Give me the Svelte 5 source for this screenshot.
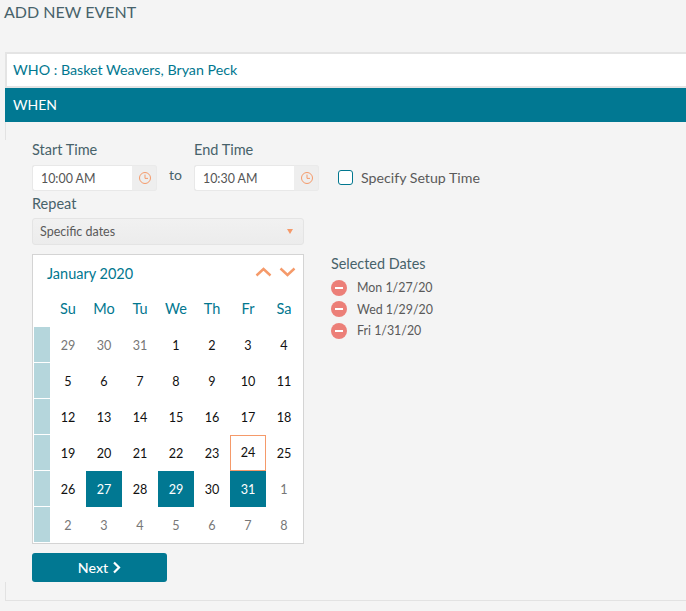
<script lang="ts">
	const dayNames = ['Su', 'Mo', 'Tu', 'We', 'Th', 'Fr', 'Sa']
	const weeks = [
		[29, 30, 31, 1, 2, 3, 4],
		[5, 6, 7, 8, 9, 10, 11],
		[12, 13, 14, 15, 16, 17, 18],
		[19, 20, 21, 22, 23, 24, 25],
		[26, 27, 28, 29, 30, 31, 1],
		[2, 3, 4, 5, 6, 7, 8]
	]
	const selected = [27, 29, 31]
	const selectedDates = ['Mon 1/27/20', 'Wed 1/29/20', 'Fri 1/31/20']

	function isOther(week: number, day: number) {
		return (week === 0 && day > 20) || (week >= 4 && day < 15)
	}
</script>

{#snippet clock()}
	<svg class="clock" width="14" height="14" viewBox="0 0 14 14" aria-hidden="true">
		<circle cx="7" cy="7" r="5.5" />
		<path d="M7 3.6V7.4H10" />
	</svg>
{/snippet}

<div class="page">
	<h1>ADD NEW EVENT</h1>
	<div class="who">WHO : Basket Weavers, Bryan Peck</div>
	<div class="when-bar">WHEN</div>
	<div class="panel">
		<div class="content">
			<div class="times">
				<div class="field">
					<span class="label">Start Time</span>
					<div class="time-input">
						<span class="value">10:00 AM</span>
						<span class="addon">{@render clock()}</span>
					</div>
				</div>
				<span class="to">to</span>
				<div class="field">
					<span class="label">End Time</span>
					<div class="time-input">
						<span class="value">10:30 AM</span>
						<span class="addon">{@render clock()}</span>
					</div>
				</div>
				<label class="setup">
					<span class="checkbox"></span>
					Specify Setup Time
				</label>
			</div>

			<div class="label repeat-label">Repeat</div>
			<div class="select">
				<span>Specific dates</span>
				<span class="caret"></span>
			</div>

			<div class="date-row">
				<div class="calendar">
					<div class="cal-head">
						<span class="month">January 2020</span>
						<span class="arrows">
							<svg width="17" height="10" viewBox="0 0 17 10" aria-hidden="true"><path d="M1.5 8.5L8.5 2L15.5 8.5" /></svg>
							<svg width="17" height="10" viewBox="0 0 17 10" aria-hidden="true"><path d="M1.5 1.5L8.5 8L15.5 1.5" /></svg>
						</span>
					</div>
					<div class="grid day-names">
						<span class="wk"></span>
						{#each dayNames as name}
							<span class="day-name">{name}</span>
						{/each}
					</div>
					{#each weeks as week, w}
						<div class="grid">
							<span class="wk filled"></span>
							{#each week as day}
								{@const other = isOther(w, day)}
								<span
									class="day"
									class:other
									class:today={day === 24}
									class:selected={!other && selected.includes(day)}>{day}</span>
							{/each}
						</div>
					{/each}
				</div>

				<div class="selected-dates">
					<div class="label small">Selected Dates</div>
					{#each selectedDates as date}
						<div class="date-item">
							<span class="remove"></span>
							{date}
						</div>
					{/each}
				</div>
			</div>

			<button class="next">
				Next
				<svg width="9" height="13" viewBox="0 0 9 13" aria-hidden="true"><path d="M2 1.5L7 6.5L2 11.5" /></svg>
			</button>
		</div>
	</div>
</div>

<style>
	:global(body) {
		background: #f4f4f4;
		font-family: Lato, 'Liberation Sans', sans-serif;
	}

	.page {
		height: 611px;
		overflow: hidden;
	}

	h1 {
		margin: 0;
		padding: 2px 0 0 4px;
		height: 52px;
		box-sizing: border-box;
		font-size: 16px;
		line-height: 19px;
		font-weight: 400;
		color: #47626a;
	}

	.who {
		box-sizing: border-box;
		height: 36px;
		margin-left: 5px;
		padding-left: 6px;
		background: #fff;
		border: 2px solid #e4e4e4;
		border-right: none;
		font-size: 14.25px;
		line-height: 32px;
		color: #01778f;
	}

	.when-bar {
		height: 34px;
		margin-left: 5px;
		padding-left: 8px;
		background: #017892;
		color: #fff;
		font-size: 14px;
		line-height: 33px;
	}

	.panel {
		display: flow-root;
		margin-left: 5px;
		height: 479px;
		box-sizing: border-box;
		border-left: 1px solid #e2e2e2;
		border-bottom: 1px solid #e2e2e2;
	}

	.content {
		margin: 18px 0 0 -1px;
		padding-left: 27px;
		height: 442px;
		background: #f4f4f4;
	}

	.times {
		display: flex;
		align-items: flex-start;
		height: 55px;
	}

	.label {
		font-size: 14.5px;
		line-height: 18px;
		color: #47626a;
	}

	.field {
		display: flex;
		flex-direction: column;
		gap: 6px;
		padding-top: 1px;
	}

	.time-input {
		display: flex;
		box-sizing: border-box;
		width: 125px;
		height: 26px;
		background: #eee;
		border-radius: 3px;
		box-shadow: 0 0 0 1px #eaeaea inset;
	}

	.value {
		box-sizing: border-box;
		width: 100px;
		padding-left: 8px;
		background: #fff;
		border: 1px solid #e8e8e8;
		border-right: none;
		border-radius: 3px 0 0 3px;
		font-size: 12.4px;
		line-height: 25px;
		color: #555;
	}

	.addon {
		flex: 1;
		display: flex;
		align-items: center;
		justify-content: center;
	}

	.clock {
		fill: none;
		stroke: #f59a6a;
		stroke-width: 1;
	}

	.to {
		width: 37px;
		margin-top: 26px;
		text-align: center;
		font-size: 14px;
		line-height: 18px;
		color: #47626a;
	}

	.setup {
		display: flex;
		align-items: center;
		gap: 8px;
		margin: 24px 0 0 19px;
		height: 26px;
		font-size: 14.2px;
		color: #5a5a5a;
	}

	.checkbox {
		box-sizing: border-box;
		width: 15px;
		height: 15px;
		background: #fff;
		border: 1px solid #01778f;
		border-radius: 3px;
	}

	.repeat-label {
		height: 23px;
		line-height: 17px;
	}

	.select {
		display: flex;
		align-items: center;
		justify-content: space-between;
		box-sizing: border-box;
		width: 272px;
		height: 27px;
		padding: 0 10px 0 7px;
		background: linear-gradient(#f1f1f1, #ececec);
		border: 1px solid #e4e4e4;
		border-radius: 3px;
		font-size: 12.5px;
		color: #5a5a5a;
	}

	.caret {
		width: 0;
		height: 0;
		border-left: 3.5px solid transparent;
		border-right: 3.5px solid transparent;
		border-top: 5px solid #f59a6a;
	}

	.date-row {
		display: flex;
		align-items: flex-start;
		margin-top: 9px;
	}

	.calendar {
		box-sizing: border-box;
		width: 272px;
		height: 290px;
		background: #fff;
		border: 1px solid #d4d4d4;
		padding: 0 1px;
	}

	.cal-head {
		display: flex;
		align-items: center;
		justify-content: space-between;
		height: 36px;
		padding-left: 13px;
	}

	.month {
		font-size: 14.5px;
		color: #01778f;
	}

	.arrows {
		display: flex;
		gap: 7px;
		margin-right: 6px;
	}

	.arrows svg,
	.next svg {
		fill: none;
	}

	.arrows svg {
		stroke: #f59a6a;
		stroke-width: 2.4;
		margin-top: -2px;
	}

	.grid {
		display: grid;
		grid-template-columns: 16px repeat(7, 36px);
		grid-template-rows: 36px;
		height: 36px;
	}

	.day-name {
		font-size: 14.5px;
		line-height: 36px;
		text-align: center;
		color: #01778f;
	}

	.wk.filled {
		background: #b5d6dc;
		margin-bottom: 1px;
	}

	.day {
		box-sizing: border-box;
		height: 36px;
		padding-top: 1px;
		font-size: 12.6px;
		line-height: 35px;
		text-align: center;
		color: #111;
	}

	.day.other {
		color: #777;
	}

	.day.today {
		border: 1px solid #f59a6a;
		padding-top: 0;
		line-height: 34px;
	}

	.day.selected {
		background: #017892;
		color: #fff;
	}

	.selected-dates {
		margin: 1px 0 0 27px;
	}

	.small {
		font-size: 14.4px;
		line-height: 18px;
		margin-bottom: 4px;
	}

	.date-item {
		display: flex;
		align-items: center;
		gap: 10px;
		height: 21.5px;
		font-size: 12.4px;
		color: #5a5a5a;
	}

	.remove {
		position: relative;
		width: 16px;
		height: 16px;
		border-radius: 50%;
		background: #ec7f78;
	}

	.remove::after {
		content: '';
		position: absolute;
		left: 4px;
		right: 4px;
		top: 7px;
		height: 2px;
		background: #fff;
	}

	.next {
		display: flex;
		align-items: center;
		justify-content: center;
		gap: 4px;
		width: 135px;
		height: 29px;
		margin-top: 9px;
		padding: 0;
		border: none;
		border-radius: 3px;
		background: #017892;
		color: #fff;
		font-family: inherit;
		font-size: 14.2px;
		font-weight: 500;
	}

	.next svg {
		stroke: #fff;
		stroke-width: 2.2;
	}
</style>
